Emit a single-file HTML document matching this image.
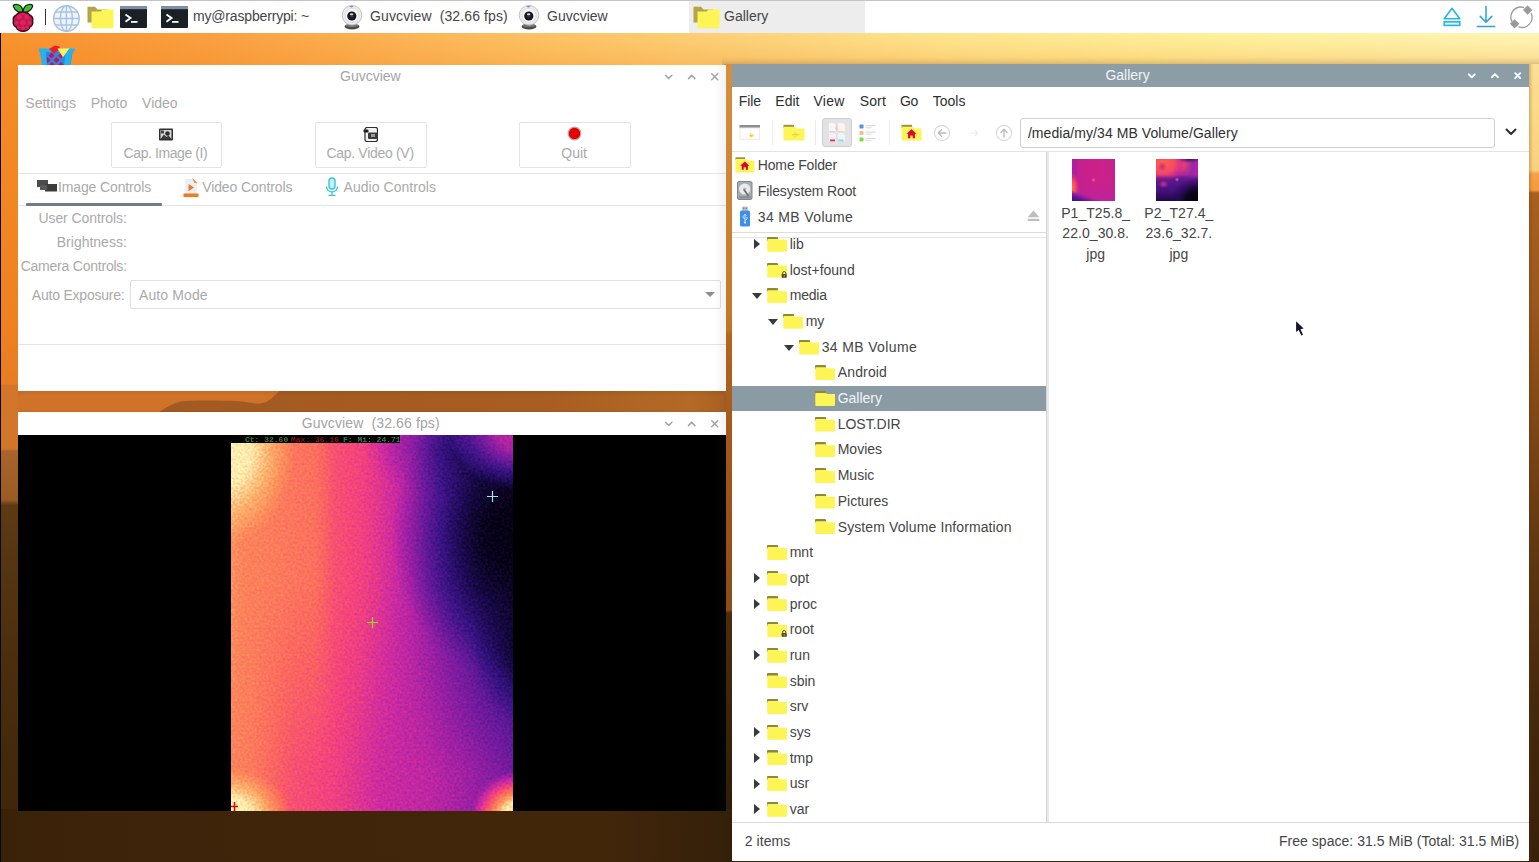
<!DOCTYPE html>
<html>
<head>
<meta charset="utf-8">
<title>Desktop</title>
<style>
*{box-sizing:border-box;margin:0;padding:0}
html,body{width:1539px;height:862px;overflow:hidden;background:#3e2309}
body{font-family:"Liberation Sans",sans-serif;font-size:14px;color:#3a3a3a;position:relative}
.abs{position:absolute}
.t{position:absolute;white-space:pre;line-height:16px;height:16px}
/* ---------- wallpaper ---------- */
#wp{position:absolute;left:0;top:0;width:1539px;height:862px;overflow:hidden}
/* ---------- taskbar ---------- */
#bar{position:absolute;left:0;top:0;width:1539px;height:33px;background:#fff;border-top:1px solid #c4c4c4}
#bar .t{top:7.2px;color:#454545}
/* ---------- windows ---------- */
.win{position:absolute;background:#fff;overflow:hidden}
.gray{color:#aaaaaa}
/* file manager */
#fm .t{color:#454545}
.fold{position:absolute;width:20px;height:15px}
.fold:before{content:"";position:absolute;left:0;top:0;width:11px;height:4px;background:#8f8638;border-radius:1px 1px 0 0}
.fold:after{content:"";position:absolute;left:0;top:2px;width:20px;height:13px;background:#fdf455;border-radius:1px;
  clip-path:polygon(0 0,0 100%,100% 100%,100% 8%,60% 8%,52% 0)}
.arr-r{position:absolute;width:0;height:0;border-left:6px solid #3a3a3a;border-top:5px solid transparent;border-bottom:5px solid transparent}
.arr-d{position:absolute;width:0;height:0;border-top:6px solid #3a3a3a;border-left:5px solid transparent;border-right:5px solid transparent}
</style>
</head>
<body>
<!-- ================= WALLPAPER ================= -->
<div id="wp">
  <!-- top sky strip -->
  <div class="abs" style="left:0;top:33px;width:1539px;height:36px;background:linear-gradient(180deg,rgba(236,120,10,0) 0,rgba(236,120,10,.05) 30%,rgba(236,120,10,.24) 100%),linear-gradient(90deg,#f7922f 0,#fa9f40 200px,#fcb254 380px,#fdc466 560px,#fdd27a 740px,#fee58e 950px,#fef09a 1200px,#fef5b4 1539px)"></div>
  <div class="abs" style="left:722px;top:57px;width:817px;height:8px;background:linear-gradient(180deg,rgba(130,100,70,0) 0,rgba(130,100,70,.10) 50%,rgba(130,100,70,.30) 100%)"></div>
  <!-- left strip -->
  <div class="abs" style="left:0;top:69px;width:20px;height:793px;background:linear-gradient(180deg,#f48c26 0,#ee8022 261px,#e87c22 315px,#d3752a 316px,#d0762a 380px,#a8642a 382px,#9a5c26 431px,#5c3a14 436px,#4a2e0e 591px,#3c2409 793px)"></div>
  <!-- band between the two guvcview windows -->
  <svg class="abs" style="left:18px;top:389px" width="714" height="25" viewBox="0 0 714 25"><defs><linearGradient id="bnd" x1="0" x2="1" y1="0" y2="0"><stop offset="0" stop-color="#a25a22"/><stop offset="0.3" stop-color="#a55b20"/><stop offset="0.68" stop-color="#a85e20"/><stop offset="0.93" stop-color="#b46a26"/><stop offset="1" stop-color="#a85e20"/></linearGradient><linearGradient id="bnv" x1="0" x2="0" y1="0" y2="1"><stop offset="0" stop-color="#000" stop-opacity="0.10"/><stop offset="0.3" stop-color="#000" stop-opacity="0"/><stop offset="0.8" stop-color="#000" stop-opacity="0"/><stop offset="1" stop-color="#000" stop-opacity="0.08"/></linearGradient></defs><rect width="714" height="25" fill="#d07328"/><path d="M138 25C150 17 158 12.500 168 12C185 11.300 205 11.500 220 12.200C232 13 236 15 242 14.500C252 13.500 256 6 264 0L714 0L714 25Z" fill="url(#bnd)"/><rect width="714" height="25" fill="url(#bnv)"/></svg>
  <!-- gap between left windows and file manager -->
  <div class="abs" style="left:724px;top:64px;width:10px;height:798px;background:linear-gradient(180deg,#d49040 0,#c47a2c 236px,#c07428 266px,#b4661f 270px,#a85c1e 336px,#96501a 476px,#8a4c18 546px,#4c2c0c 549px,#34200a 700px,#2a1805 798px)"></div>
  <!-- bottom band -->
  <div class="abs" style="left:0;top:809px;width:734px;height:53px;background:linear-gradient(90deg,#3a2209 0,#40250a 300px,#42260a 600px,#34200a 734px)"></div>
  <!-- right strip -->
  <div class="abs" style="left:1529px;top:64px;width:10px;height:798px;background:linear-gradient(90deg,rgba(90,50,10,.25) 0,rgba(90,50,10,0) 4px),linear-gradient(180deg,#fbdf96 0,#fbd884 56px,#fad07e 106px,#f6a046 110px,#f59a40 126px,#a8601f 129px,#9a581c 236px,#7a4414 376px,#5a3410 516px,#46280c 636px,#382008 798px)"></div>
  <!-- black left column -->
  <div class="abs" style="left:0;top:1px;width:1px;height:861px;background:#0a0603"></div>
</div>

<!-- ================= TASKBAR ================= -->
<div id="bar">
  <div class="abs" style="left:689px;top:0;width:176px;height:32px;background:#ededed"></div>
  <div class="abs" style="left:45px;top:8px;width:1px;height:16px;background:#333"></div>
  <span class="t" style="left:193px;letter-spacing:-0.17px">my@raspberrypi: ~</span>
  <span class="t" style="left:370px;letter-spacing:0.12px">Guvcview  (32.66 fps)</span>
  <span class="t" style="left:547px">Guvcview</span>
  <span class="t" style="left:724px">Gallery</span>
  
  <!-- raspberry -->
  <svg class="abs" style="left:11px;top:2px" width="24" height="29" viewBox="0 0 24 29">
    <path d="M11.6 9.6C9.5 9.8 4.2 8.6 2.4 3.6C2.2 2.2 3 1.4 4.4 1.4C7.6 1.3 10.8 3.4 11.8 7.2z" fill="#3fbf36" stroke="#0e2a0c" stroke-width="1.3"/>
    <path d="M12.4 9.6C14.5 9.8 19.8 8.6 21.6 3.6C21.8 2.2 21 1.4 19.6 1.4C16.4 1.3 13.2 3.4 12.2 7.2z" fill="#3fbf36" stroke="#0e2a0c" stroke-width="1.3"/>
    <path d="M12 9c3.2 0 5.6 1.2 6.6 3c2.6 1.2 3.6 3.6 3 6c0.6 2.6-0.6 5-2.8 6.2c-1 2.4-3.6 4-6.8 4s-5.8-1.6-6.8-4c-2.2-1.2-3.4-3.6-2.8-6.2c-0.600-2.400 0.400-4.800 3-6c1-1.800 3.400-3 6.600-3z" fill="#b81c50" stroke="#3a0a18" stroke-width="1.4"/>
    <g fill="#e6205e"><circle cx="8.2" cy="14" r="2.5"/><circle cx="15.8" cy="14" r="2.5"/><circle cx="12" cy="19.6" r="2.7"/><circle cx="5.6" cy="20" r="1.9"/><circle cx="18.4" cy="20" r="1.9"/><circle cx="12" cy="25.2" r="2"/><circle cx="7.600" cy="24.400" r="1.500"/><circle cx="16.400" cy="24.400" r="1.500"/><ellipse cx="12" cy="11" rx="2" ry="1.2"/></g>
  </svg>
  <!-- globe -->
  <svg class="abs" style="left:52px;top:2.5px" width="29" height="29" viewBox="0 0 29 29"><circle cx="14.400" cy="14.500" r="12.800" fill="#eef4fb" stroke="#a9c2e6" stroke-width="1.500"/><g fill="none" stroke="#a9c2e6" stroke-width="1.400"><ellipse cx="14.400" cy="14.500" rx="6" ry="12.800"/><path d="M14.400 1.700v25.600M1.600 14.500h25.600M3.600 8h21.600M3.600 21h21.600"/></g></svg>
  <svg class="abs" style="left:87px;top:4.7px" width="27" height="23" viewBox="0 0 27 23"><path d="M0.5 0.8h7.5l2.5 2.6h9.5v13h-19.5z" fill="#b3a44c"/><path d="M4.5 5.6h9l2.2-2h10.8v18.6h-22z" fill="#fdf455"/></svg>
  <svg class="abs" style="left:120.3px;top:4.5px" width="27" height="22" viewBox="0 0 27 22"><rect x="0" y="0" width="27" height="22" rx="1" fill="#1a2026"/><rect x="0" y="0" width="27" height="3.2" fill="#7f8fa6"/><path d="M5.5 8.5l5 3.6l-5 3.6" fill="none" stroke="#fff" stroke-width="1.9" stroke-linejoin="miter"/><rect x="11" y="15" width="6.5" height="1.8" fill="#fff"/></svg>
  <svg class="abs" style="left:161px;top:4.5px" width="27" height="22" viewBox="0 0 27 22"><rect x="0" y="0" width="27" height="22" rx="1" fill="#1a2026"/><rect x="0" y="0" width="27" height="3.2" fill="#7f8fa6"/><path d="M5.5 8.5l5 3.6l-5 3.6" fill="none" stroke="#fff" stroke-width="1.9" stroke-linejoin="miter"/><rect x="11" y="15" width="6.5" height="1.8" fill="#fff"/></svg>
  <svg class="abs" style="left:340.5px;top:3px" width="22" height="26" viewBox="0 0 22 26"><ellipse cx="11" cy="22.5" rx="7.5" ry="2.9" fill="#4a4a4a"/><ellipse cx="11" cy="21.6" rx="6.5" ry="1.6" fill="#777"/><circle cx="11" cy="11.2" r="9.8" fill="#ececec" stroke="#c4c4c4" stroke-width="1"/><circle cx="11" cy="11.5" r="7" fill="#f6f6f6" stroke="#dadada" stroke-width="0.8"/><circle cx="10.8" cy="12" r="4.6" fill="#15151c"/><circle cx="10.8" cy="12" r="2.2" fill="#2a2a4a"/><ellipse cx="10.6" cy="10.3" rx="1.8" ry="1" fill="#e8e8f0" opacity="0.9"/><ellipse cx="10.5" cy="2.6" rx="2" ry="0.8" fill="#8a8ad0"/></svg>
  <svg class="abs" style="left:518px;top:3px" width="22" height="26" viewBox="0 0 22 26"><ellipse cx="11" cy="22.5" rx="7.5" ry="2.9" fill="#4a4a4a"/><ellipse cx="11" cy="21.6" rx="6.5" ry="1.6" fill="#777"/><circle cx="11" cy="11.2" r="9.8" fill="#ececec" stroke="#c4c4c4" stroke-width="1"/><circle cx="11" cy="11.5" r="7" fill="#f6f6f6" stroke="#dadada" stroke-width="0.8"/><circle cx="10.8" cy="12" r="4.6" fill="#15151c"/><circle cx="10.8" cy="12" r="2.2" fill="#2a2a4a"/><ellipse cx="10.6" cy="10.3" rx="1.8" ry="1" fill="#e8e8f0" opacity="0.9"/><ellipse cx="10.5" cy="2.6" rx="2" ry="0.8" fill="#8a8ad0"/></svg>
  <svg class="abs" style="left:692.7px;top:4.7px" width="27" height="23" viewBox="0 0 27 23"><path d="M0.5 0.8h7.5l2.5 2.6h9.5v13h-19.5z" fill="#b3a44c"/><path d="M4.5 5.6h9l2.2-2h10.8v18.6h-22z" fill="#fdf455"/></svg>
  <!-- tray -->
  <svg class="abs" style="left:1441px;top:5px" width="22" height="22" viewBox="0 0 22 22"><path d="M11 2.300l7.800 10.400h-15.600z" fill="#f4fbfe" stroke="#26b6e0" stroke-width="1.600" stroke-linejoin="round"/><rect x="3.200" y="15.800" width="15.600" height="3.600" fill="#dff5fb" stroke="#26b6e0" stroke-width="1.600"/></svg>
  <svg class="abs" style="left:1475px;top:4px" width="22" height="24" viewBox="0 0 22 24"><path d="M11 1.500v15.500M5.200 11.400l5.800 5.800l5.800-5.800M2.400 21.600h17.200" fill="none" stroke="#2aa2d2" stroke-width="1.500" stroke-linecap="round" stroke-linejoin="round"/></svg>
  <svg class="abs" style="left:1508px;top:3px" width="27" height="27" viewBox="0 0 27 27"><path d="M16 3.600a10 10 0 0 0-11.800 14.400M10.600 22.800a10 10 0 0 0 12.400-13.800" fill="none" stroke="#9c9c9c" stroke-width="1.300"/><rect x="-3.300" y="-3.300" width="6.600" height="6.600" transform="translate(19.600 6) rotate(45)" fill="#9a9a9a"/><rect x="-3.300" y="-3.300" width="6.600" height="6.600" transform="translate(6.600 19.800) rotate(45)" fill="#9a9a9a"/></svg>

</div>

<svg class="abs" style="left:37px;top:44px" width="40" height="24" viewBox="0 0 40 24">
  <path d="M1.500 4.600h36.500l-1 3.600h-34.500z" fill="#22b4f0"/>
  <path d="M4.500 8h31l-2.500 16h-26z" fill="#2a86e0"/>
  <g fill="#c8105a"><path d="M14.500 8.500l3 3l-3 3l-3-3z"/><path d="M10.500 13l3 3l-3 3l-3-3z"/><path d="M19.500 13l3 3l-3 3l-3-3z"/><path d="M24 9l2.800 2.800l-2.800 2.800l-2.800-2.800z"/><path d="M15 18l3 3l-3 3l-3-3z"/><path d="M24 18l3 3l-3 3l-3-3z"/></g>
  <path d="M12 5l6-3.500l5 1.200l-1.500 3.800l-4.500 3z" fill="#ee1c24"/>
  <path d="M28.500 7l7-2l-2.500 19h-6z" fill="#22b4f0"/>
  <path d="M20.500 4.400l12-0.200l-6.500 9z" fill="#fff05a"/>
  <path d="M2.500 5.500l6-0.500l2 19h-5z" fill="#22b4f0"/>
</svg>

<!-- ================= WINDOW 1 : Guvcview controls ================= -->
<div class="win" id="w1" style="left:18px;top:65px;width:708px;height:326px">
  
  <span class="t gray" style="left:322px;top:3px;color:#a4a4a4">Guvcview</span>
  <svg class="abs" style="left:645px;top:6px" width="60" height="12" viewBox="0 0 60 12"><g fill="none" stroke="#a4a4a4" stroke-width="1.5" stroke-linecap="round" stroke-linejoin="round"><path d="M2.5 4.2l3.2 3.2l3.2-3.2"/><path d="M25.5 7.6l3.2-3.2l3.2 3.2"/><path d="M48.7 2.8l6 6M54.7 2.8l-6 6"/></g></svg>
  <span class="t gray" style="left:7.3px;top:30px">Settings</span>
  <span class="t gray" style="left:72.7px;top:30px">Photo</span>
  <span class="t gray" style="left:124.1px;top:30px">Video</span>
  <!-- buttons -->
  <div class="abs" style="left:93px;top:57px;width:111px;height:46px;border:1px solid #e3e3e3;border-radius:2px"></div>
  <div class="abs" style="left:297px;top:57px;width:112px;height:46px;border:1px solid #e3e3e3;border-radius:2px"></div>
  <div class="abs" style="left:501px;top:57px;width:112px;height:46px;border:1px solid #e3e3e3;border-radius:2px"></div>
  <span class="t gray" style="left:105.6px;top:80.4px;letter-spacing:-0.41px">Cap. Image (I)</span>
  <span class="t gray" style="left:308.4px;top:80.4px;letter-spacing:-0.3px">Cap. Video (V)</span>
  <span class="t gray" style="left:543.3px;top:80px">Quit</span>
  <!-- cap image icon -->
  <svg class="abs" style="left:141px;top:63px" width="14" height="13" viewBox="0 0 14 13"><rect x="0" y="0.5" width="14" height="12" rx="1" fill="#2e2e2e"/><rect x="1.5" y="2" width="11" height="9" fill="#d8d8d8"/><path d="M1.5 11l3.5-4.5l2.5 2.5l2-1.5l3 3.5z" fill="#3a3a3a"/><circle cx="8.5" cy="5.5" r="2.3" fill="#2e2e2e"/><rect x="2" y="2.5" width="3" height="3" fill="#444"/></svg>
  <!-- cap video icon -->
  <svg class="abs" style="left:345px;top:62px" width="15" height="15" viewBox="0 0 15 15"><rect x="2" y="0.5" width="12.5" height="14" rx="2" fill="#f2f2f2" stroke="#2e2e2e" stroke-width="1.2"/><rect x="0.5" y="2.5" width="5" height="3" rx="1" fill="#222"/><rect x="5" y="5.5" width="9.5" height="6.5" rx="1" fill="#3a3a3a"/><rect x="8" y="7" width="4" height="3" fill="#9a9a9a"/></svg>
  <!-- quit icon -->
  <svg class="abs" style="left:549px;top:61px" width="15" height="15" viewBox="0 0 15 15"><circle cx="7.5" cy="7.5" r="6.3" fill="#e60000" stroke="#c9a0a0" stroke-width="1.2"/></svg>
  <!-- tab bar -->
  <div class="abs" style="left:0;top:108px;width:708px;height:1px;background:#e6e6e6"></div>
  <div class="abs" style="left:0;top:140px;width:708px;height:1px;background:#e2e4e6"></div>
  <div class="abs" style="left:8px;top:138px;width:136px;height:3px;background:#717d84;border-radius:1px"></div>
  <svg class="abs" style="left:19px;top:115px" width="20" height="12" viewBox="0 0 20 12"><rect x="0" y="0" width="11" height="7" fill="#4c4c4c"/><rect x="8" y="4" width="12" height="7.5" fill="#3c3c3c"/><rect x="3" y="5" width="7" height="5" fill="#5a5a5a"/></svg>
  <span class="t gray" style="left:40px;top:114.4px;letter-spacing:-0.13px">Image Controls</span>
  <svg class="abs" style="left:165px;top:112px" width="16" height="21" viewBox="0 0 16 21"><path d="M2 2h8l4 4v11h-12z" fill="#eceff1"/><path d="M9 0.5l5.5 5.5h-3z" fill="#f08a3c"/><path d="M5.5 7l5.5 3.6l-5.5 3.6z" fill="#e87a2c"/><rect x="0.5" y="16.5" width="15" height="3.6" fill="#ee7a22"/></svg>
  <span class="t gray" style="left:184.2px;top:114.4px;letter-spacing:-0.1px">Video Controls</span>
  <svg class="abs" style="left:307px;top:112px" width="14" height="20" viewBox="0 0 14 20"><rect x="4" y="1" width="6" height="11" rx="3" fill="#c9f0f6" stroke="#36c4dc" stroke-width="1.4"/><path d="M1.5 9.5a5.5 5.5 0 0 0 11 0M7 15v3M3.5 18.3h7" fill="none" stroke="#36c4dc" stroke-width="1.3"/></svg>
  <span class="t gray" style="left:325.5px;top:114.4px;letter-spacing:0.05px">Audio Controls</span>
  <!-- form -->
  <span class="t gray" style="right:599.2px;top:145px;letter-spacing:-0.08px">User Controls:</span>
  <span class="t gray" style="right:599.2px;top:169.4px">Brightness:</span>
  <span class="t gray" style="right:599.2px;top:193.4px;letter-spacing:-0.22px">Camera Controls:</span>
  <span class="t gray" style="right:601.5px;top:221.6px;letter-spacing:-0.22px">Auto Exposure:</span>
  <div class="abs" style="left:112px;top:215px;width:591px;height:29px;border:1px solid #dedede;border-radius:2px"></div>
  <span class="t gray" style="left:121px;top:221.6px;letter-spacing:0.11px">Auto Mode</span>
  <div class="abs" style="left:687px;top:226.5px;width:0;height:0;border-top:5px solid #8e8e8e;border-left:5px solid transparent;border-right:5px solid transparent"></div>
  <div class="abs" style="left:0;top:279px;width:708px;height:1px;background:#e4e4e4"></div>

</div>

<!-- ================= WINDOW 2 : Guvcview video ================= -->
<div class="win" id="w2" style="left:18px;top:412px;width:708px;height:399px">
  <div class="abs" style="left:0;top:23px;width:708px;height:376px;background:#000"></div>
  <!--THERMAL-START--><svg class="abs" style="left:213px;top:23px" width="282" height="376" viewBox="0 0 282 376">
<defs>
<filter id="cmap" x="0" y="0" width="100%" height="100%" color-interpolation-filters="sRGB">
<feTurbulence type="fractalNoise" baseFrequency="0.42" numOctaves="1" seed="7" result="n"/>
<feColorMatrix in="n" type="matrix" values="1 0 0 0 0  1 0 0 0 0  1 0 0 0 0  0 0 0 0 1" result="ng"/>
<feComposite in="SourceGraphic" in2="ng" operator="arithmetic" k1="0" k2="1" k3="0.17" k4="-0.085" result="s"/>
<feComponentTransfer in="s">
<feFuncR type="table" tableValues="0.016 0.110 0.227 0.416 0.604 0.800 0.957 0.984 0.988 0.992 0.996"/>
<feFuncG type="table" tableValues="0.008 0.039 0.078 0.102 0.125 0.165 0.259 0.400 0.541 0.722 0.965"/>
<feFuncB type="table" tableValues="0.059 0.314 0.522 0.612 0.643 0.635 0.494 0.376 0.353 0.447 0.729"/>
</feComponentTransfer>
</filter>
<linearGradient id="tb" x1="0" x2="1" y1="0" y2="0"><stop offset="0" stop-color="#d1d1d1"/><stop offset="0.04" stop-color="#c7c7c7"/><stop offset="0.15" stop-color="#c2c2c2"/><stop offset="0.3" stop-color="#bababa"/><stop offset="0.335" stop-color="#afafaf"/><stop offset="0.37" stop-color="#a3a3a3"/><stop offset="0.46" stop-color="#999999"/><stop offset="0.52" stop-color="#8e8e8e"/><stop offset="0.58" stop-color="#808080"/><stop offset="0.642" stop-color="#737373"/><stop offset="0.7" stop-color="#616161"/><stop offset="0.759" stop-color="#4f4f4f"/><stop offset="0.83" stop-color="#3b3b3b"/><stop offset="0.89" stop-color="#292929"/><stop offset="1" stop-color="#1c1c1c"/></linearGradient>
<linearGradient id="tbot" x1="0" x2="1" y1="0" y2="0"><stop offset="0" stop-color="#c7c7c7"/><stop offset="0.08" stop-color="#bfbfbf"/><stop offset="0.16" stop-color="#b0b0b0"/><stop offset="0.22" stop-color="#a3a3a3"/><stop offset="0.36" stop-color="#989898"/><stop offset="0.45" stop-color="#8c8c8c"/><stop offset="0.53" stop-color="#808080"/><stop offset="0.7" stop-color="#787878"/><stop offset="0.82" stop-color="#6b6b6b"/><stop offset="1" stop-color="#525252"/></linearGradient>
<linearGradient id="tmv" x1="0" x2="0" y1="0" y2="1"><stop offset="0.40" stop-color="#fff" stop-opacity="0"/><stop offset="0.90" stop-color="#fff" stop-opacity="1"/></linearGradient>
<mask id="tm"><rect width="282" height="376" fill="url(#tmv)"/></mask>
<radialGradient id="tdk" cx="0.5" cy="0.5" r="0.5"><stop offset="0" stop-color="#000" stop-opacity="0.95"/><stop offset="0.2" stop-color="#000" stop-opacity="0.9"/><stop offset="0.58" stop-color="#000" stop-opacity="0.4"/><stop offset="1" stop-color="#000" stop-opacity="0"/></radialGradient>
<radialGradient id="thot" cx="0.5" cy="0.5" r="0.5"><stop offset="0" stop-color="#fff" stop-opacity="1"/><stop offset="0.35" stop-color="#fff" stop-opacity="0.95"/><stop offset="0.7" stop-color="#fff" stop-opacity="0.4"/><stop offset="1" stop-color="#fff" stop-opacity="0"/></radialGradient>
<linearGradient id="tle" x1="0" x2="1" y1="0" y2="0"><stop offset="0" stop-color="#fff" stop-opacity="0.8"/><stop offset="1" stop-color="#fff" stop-opacity="0"/></linearGradient>
<linearGradient id="tlev" x1="0" x2="0" y1="0" y2="1"><stop offset="0" stop-color="#fff"/><stop offset="0.15" stop-color="#fff"/><stop offset="0.45" stop-color="#000"/><stop offset="1" stop-color="#000"/></linearGradient>
<mask id="tlm"><rect width="282" height="376" fill="url(#tlev)"/></mask>
</defs>
<g filter="url(#cmap)">
<rect width="282" height="376" fill="url(#tb)"/>
<rect width="282" height="376" fill="url(#tbot)" mask="url(#tm)"/>
<ellipse cx="282" cy="100" rx="122" ry="142" fill="url(#tdk)"/>
<ellipse cx="228" cy="10" rx="95" ry="55" fill="url(#tdk)" opacity="0.35"/>
<ellipse cx="292" cy="215" rx="50" ry="75" fill="url(#tdk)" opacity="0.7"/>
<ellipse cx="292" cy="-6" rx="76" ry="62" fill="url(#thot)" opacity="0.42"/>
<ellipse cx="-2" cy="381" rx="62" ry="48" fill="url(#thot)"/>
<ellipse cx="288" cy="382" rx="48" ry="46" fill="url(#thot)"/>
<ellipse cx="-4" cy="15" rx="68" ry="95" fill="url(#thot)" opacity="0.97"/>
</g>
<rect x="0" y="0" width="169" height="8" fill="#020402"/>
<g font-family="Liberation Mono" font-size="8" font-weight="bold">
<text x="14" y="7" fill="#6fbf6a" opacity="0.6">Ct: 32.60</text>
<text x="60" y="7" fill="#c02020" opacity="0.65">Max: 36.10</text>
<text x="112" y="7" fill="#5fbf9a" opacity="0.6">F: Mi: 24.71</text>
</g>
<path d="M256 61.5h11M261.5 56v11" stroke="#a6e6ea" stroke-width="1.2" fill="none"/>
<path d="M136 187.5h11M141.5 182v11" stroke="#8fe02a" stroke-width="1.2" fill="none"/>
<path d="M0 371.5h7M3.5 367v9" stroke="#d01010" stroke-width="1.6" fill="none"/>
</svg><!--THERMAL-END-->
  
  <span class="t" style="left:283.8px;top:3px;color:#a4a4a4;letter-spacing:0.12px">Guvcview  (32.66 fps)</span>
  <svg class="abs" style="left:645px;top:6px" width="60" height="12" viewBox="0 0 60 12"><g fill="none" stroke="#a4a4a4" stroke-width="1.5" stroke-linecap="round" stroke-linejoin="round"><path d="M2.5 4.2l3.2 3.2l3.2-3.2"/><path d="M25.5 7.6l3.2-3.2l3.2 3.2"/><path d="M48.7 2.8l6 6M54.7 2.8l-6 6"/></g></svg>

</div>

<div id="fmshade" class="abs" style="left:714px;top:65px;width:12px;height:746px;background:linear-gradient(90deg,rgba(70,80,90,0) 0,rgba(70,80,90,.07) 100%)"></div>
<!-- ================= WINDOW 3 : file manager ================= -->
<div class="win" id="fm" style="left:732px;top:64px;width:797px;height:797px">
  <div class="abs" style="left:0;top:0;width:797px;height:23px;background:#8d9da5"></div>
  <!--FM-START-->
  <span class="t" style="left:373.4px;top:3px;color:#f1f4f6">Gallery</span>
  <svg class="abs" style="left:732px;top:4px" width="64" height="16" viewBox="0 0 64 16"><g fill="none" stroke="#fafcfd" stroke-width="1.9" stroke-linecap="round" stroke-linejoin="round"><path d="M4.800 6.300l3 3l3-3"/><path d="M27.900 9.200l3-3l3 3"/><path d="M51.200 5.200l5 5M56.200 5.200l-5 5"/></g></svg>
  <span class="t" style="left:6.8px;top:28.9px;letter-spacing:-0.14px;color:#303030">File</span>
  <span class="t" style="left:43.3px;top:28.9px;letter-spacing:0px;color:#303030">Edit</span>
  <span class="t" style="left:81.5px;top:28.9px;letter-spacing:0.28px;color:#303030">View</span>
  <span class="t" style="left:127.7px;top:28.9px;letter-spacing:0.15px;color:#303030">Sort</span>
  <span class="t" style="left:168px;top:28.9px;letter-spacing:-0.44px;color:#303030">Go</span>
  <span class="t" style="left:200.8px;top:28.9px;letter-spacing:0px;color:#303030">Tools</span>
  <div class="abs" style="left:0;top:87px;width:797px;height:1px;background:#e2e2e2"></div>
  <svg class="abs" style="left:7px;top:60px" width="22" height="17" viewBox="0 0 22 17"><rect x="0.5" y="1" width="20.5" height="3" fill="#8e8e8e"/><rect x="1" y="4" width="19.5" height="11.5" fill="#fdfdfd" stroke="#ececec" stroke-width="1"/><path d="M11 8.5l5 2.8l-5 2.8z" fill="#f5ee6a"/><rect x="10.5" y="11" width="3" height="1.4" fill="#d8cf5a"/></svg>
  <div class="abs" style="left:40px;top:56px;width:1px;height:25px;background:#ececec"></div>
  <svg class="abs" style="left:51px;top:60px" width="22" height="17" viewBox="0 0 22 17"><rect x="0.5" y="0.8" width="10.5" height="3.2" fill="#9a9040"/><path d="M0.5 2.8h11l2 1.8h8v12h-21z" fill="#fdf455"/><path d="M11 7.5l6 3l-6 3z" fill="#f2e64e"/><rect x="9" y="10" width="6" height="1.2" fill="#e2d648"/></svg>
  <div class="abs" style="left:83px;top:56px;width:1px;height:25px;background:#ececec"></div>
  <div class="abs" style="left:90px;top:54px;width:30px;height:29px;background:#e3e3e3;border:1px solid #cfcfcf;border-radius:3px"></div>
  <svg class="abs" style="left:95px;top:58px" width="20" height="21" viewBox="0 0 20 21"><path d="M2 1h5l2 2v6h-7z" fill="#f6f6fb"/><path d="M11 1h5l2 2v6h-7z" fill="#fbf3ec"/><path d="M2 11h5l2 2v6h-7z" fill="#fbeef4"/><path d="M11 11h5l2 2v6h-7z" fill="#eef6fb"/><path d="M9.5 2l1.5 4l-1.5 4l-1.5-4z" fill="#f4c6d4"/><rect x="3" y="17.5" width="5" height="1.8" fill="#e0306a"/><rect x="11.5" y="17.5" width="5" height="1.8" fill="#8ad6e6"/><rect x="3" y="9" width="4.5" height="1.2" fill="#c9d6f0"/><rect x="11.5" y="9" width="4.5" height="1.2" fill="#f2d2b8"/></svg>
  <svg class="abs" style="left:127px;top:60px" width="18" height="18" viewBox="0 0 18 18"><rect x="0.5" y="0.5" width="4" height="4" rx="0.8" fill="#5b8fe2"/><rect x="0.5" y="7" width="4" height="4" rx="0.8" fill="#f4b99c"/><rect x="0.5" y="13.5" width="4" height="4" rx="0.8" fill="#7fdc3e"/><g fill="#dcdcdc"><rect x="6.5" y="1" width="10" height="1.2"/><rect x="6.5" y="3.2" width="6" height="1"/><rect x="6.5" y="7.5" width="10" height="1.2"/><rect x="6.5" y="9.7" width="6" height="1"/><rect x="6.5" y="14" width="10" height="1.2"/><rect x="6.5" y="16.2" width="6" height="1"/></g></svg>
  <div class="abs" style="left:157px;top:56px;width:1px;height:25px;background:#ececec"></div>
  <svg class="abs" style="left:169px;top:60px" width="21" height="17" viewBox="0 0 21 17"><rect x="0.5" y="0.8" width="10.5" height="3.2" fill="#9a9040"/><path d="M0.5 2.8h11l2 1.8h7v12h-20z" fill="#fdf455"/><path d="M10.5 5.2l5 4.6h-1.6v4.4h-2.2v-2.8h-2.4v2.8h-2.2v-4.4h-1.6z" fill="#e0003c"/></svg>
  <svg class="abs" style="left:201px;top:60px" width="18" height="18" viewBox="0 0 18 18"><circle cx="9" cy="9" r="7.6" fill="none" stroke="#d9d9d9" stroke-width="1.2"/><path d="M13 9h-7.5M8.5 5.8l-3.2 3.2l3.2 3.2" fill="none" stroke="#b9b9b9" stroke-width="1.3" stroke-linecap="round" stroke-linejoin="round"/></svg>
  <svg class="abs" style="left:233px;top:60px" width="18" height="18" viewBox="0 0 18 18"><path d="M5.5 9h7M10 6.2l2.8 2.8l-2.8 2.8" fill="none" stroke="#ededed" stroke-width="1.2" stroke-linecap="round" stroke-linejoin="round"/></svg>
  <svg class="abs" style="left:263px;top:60px" width="18" height="18" viewBox="0 0 18 18"><circle cx="9" cy="9" r="7.6" fill="none" stroke="#d9d9d9" stroke-width="1.2"/><path d="M9 13v-7.5M5.8 8.5l3.2-3.2l3.2 3.2" fill="none" stroke="#b9b9b9" stroke-width="1.3" stroke-linecap="round" stroke-linejoin="round"/></svg>
  <div class="abs" style="left:288px;top:54px;width:475px;height:30px;border:1px solid #cfcfcf;border-radius:3px;background:#fff"></div>
  <span class="t" style="left:295.9px;top:60.6px;letter-spacing:0.07px;color:#303030">/media/my/34 MB Volume/Gallery</span>
  <svg class="abs" style="left:772px;top:62px" width="14" height="12" viewBox="0 0 14 12"><path d="M2.5 3.5l4.5 4.5l4.5-4.5" fill="none" stroke="#2e2e2e" stroke-width="2" stroke-linecap="round" stroke-linejoin="round"/></svg>
  <div class="abs" style="left:314px;top:88px;width:3px;height:670px;background:#e9e9e9;border-left:1px solid #d4d4d4"></div>
  <svg class="abs" style="left:3px;top:93px" width="20" height="16" viewBox="0 0 20 16"><rect x="0.5" y="0.3" width="9.5" height="3" fill="#9a9040"/><path d="M0.5 2h10l1.8 1.6h7.2v11.8h-19z" fill="#fdf455"/><path d="M9.8 4.6l4.6 4.2h-1.5v4h-2v-2.6h-2.2v2.6h-2v-4h-1.5z" fill="#e0003c"/></svg>
  <span class="t" style="left:25.8px;top:93.4px;letter-spacing:-0.16px">Home Folder</span>
  <svg class="abs" style="left:5px;top:117px" width="16" height="19" viewBox="0 0 16 19"><rect x="0.5" y="0.5" width="14.5" height="18" rx="1.5" fill="#a9adb2" stroke="#80858b" stroke-width="1"/><circle cx="7.7" cy="8" r="5.6" fill="#e8eaec"/><circle cx="7.7" cy="8" r="1.6" fill="#b4b8bc"/><path d="M7.2 9l4 5.5" stroke="#6e7378" stroke-width="1.8" stroke-linecap="round"/><rect x="1.5" y="15.2" width="12.5" height="2.3" fill="#8c9096"/></svg>
  <span class="t" style="left:25.8px;top:119.4px;letter-spacing:-0.14px">Filesystem Root</span>
  <svg class="abs" style="left:7px;top:142px" width="12" height="21" viewBox="0 0 12 21"><rect x="3" y="0.5" width="6" height="4.5" fill="#c6cbd0"/><rect x="4.2" y="1.6" width="1.2" height="1.6" fill="#6a7076"/><rect x="6.6" y="1.6" width="1.2" height="1.6" fill="#6a7076"/><rect x="1" y="4.5" width="10" height="16" rx="1.5" fill="#3f8fea"/><path d="M6 8v8M6 8l-1.4 1.8M6 8l1.4 1.8M6 13l-2-1.5v-1.5M6 14.5l2-1.5v-2" stroke="#cfe4fb" stroke-width="0.9" fill="none"/><circle cx="6" cy="16.6" r="1.1" fill="#cfe4fb"/></svg>
  <span class="t" style="left:25.8px;top:145px;letter-spacing:0.36px">34 MB Volume</span>
  <svg class="abs" style="left:295px;top:146px" width="13" height="12" viewBox="0 0 13 12"><path d="M6.5 0.5l5.8 6.8h-11.6z" fill="#bdbdbd"/><rect x="0.7" y="8.8" width="11.6" height="2.2" fill="#bdbdbd"/></svg>
  <div class="abs" style="left:0;top:167.5px;width:314px;height:1px;background:#dcdcdc"></div>
  <div class="abs" style="left:0;top:173px;width:314px;height:1px;background:#e6e6e6"></div>
  <div class="arr-r" style="left:22.0px;top:175.4px"></div>
  <div class="fold" style="left:35.3px;top:172.8px"></div>
  <span class="t" style="left:57.7px;top:172.0px">lib</span>
  <div class="fold" style="left:35.3px;top:198.5px"></div>
  <svg class="abs" style="left:48.5px;top:206.7px" width="6.4" height="7.2" viewBox="0 0 8 9"><path d="M2 4v-1.3a2 2 0 0 1 4 0v1.3" fill="none" stroke="#5a5210" stroke-width="1.2"/><rect x="0.8" y="3.8" width="6.4" height="4.6" rx="0.6" fill="#4a4a2a"/><rect x="3.4" y="5.2" width="1.2" height="1.8" fill="#d8d08a"/></svg>
  <span class="t" style="left:57.7px;top:197.7px">lost+found</span>
  <div class="arr-d" style="left:20.3px;top:229.2px"></div>
  <div class="fold" style="left:35.3px;top:224.2px"></div>
  <span class="t" style="left:57.7px;top:223.4px;letter-spacing:-0.21px">media</span>
  <div class="arr-d" style="left:36.3px;top:254.8px"></div>
  <div class="fold" style="left:51.3px;top:249.8px"></div>
  <span class="t" style="left:73.7px;top:249.0px">my</span>
  <div class="arr-d" style="left:52.3px;top:280.5px"></div>
  <div class="fold" style="left:67.3px;top:275.5px"></div>
  <span class="t" style="left:89.7px;top:274.7px;letter-spacing:0.36px">34 MB Volume</span>
  <div class="fold" style="left:83.3px;top:301.2px"></div>
  <span class="t" style="left:105.7px;top:300.4px;letter-spacing:0.16px">Android</span>
  <div class="abs" style="left:0;top:321.9px;width:314px;height:25.2px;background:#8b9ba3"></div>
  <div class="fold" style="left:83.3px;top:326.9px"></div>
  <span class="t" style="left:105.7px;top:326.1px;color:#f2f5f7">Gallery</span>
  <div class="fold" style="left:83.3px;top:352.6px"></div>
  <span class="t" style="left:105.7px;top:351.8px">LOST.DIR</span>
  <div class="fold" style="left:83.3px;top:378.2px"></div>
  <span class="t" style="left:105.7px;top:377.4px">Movies</span>
  <div class="fold" style="left:83.3px;top:403.9px"></div>
  <span class="t" style="left:105.7px;top:403.1px">Music</span>
  <div class="fold" style="left:83.3px;top:429.6px"></div>
  <span class="t" style="left:105.7px;top:428.8px">Pictures</span>
  <div class="fold" style="left:83.3px;top:455.3px"></div>
  <span class="t" style="left:105.7px;top:454.5px;letter-spacing:0.11px">System Volume Information</span>
  <div class="fold" style="left:35.3px;top:481.0px"></div>
  <span class="t" style="left:57.7px;top:480.2px">mnt</span>
  <div class="arr-r" style="left:22.0px;top:509.2px"></div>
  <div class="fold" style="left:35.3px;top:506.6px"></div>
  <span class="t" style="left:57.7px;top:505.8px">opt</span>
  <div class="arr-r" style="left:22.0px;top:534.9px"></div>
  <div class="fold" style="left:35.3px;top:532.3px"></div>
  <span class="t" style="left:57.7px;top:531.5px">proc</span>
  <div class="fold" style="left:35.3px;top:558.0px"></div>
  <svg class="abs" style="left:48.5px;top:566.2px" width="6.4" height="7.2" viewBox="0 0 8 9"><path d="M2 4v-1.3a2 2 0 0 1 4 0v1.3" fill="none" stroke="#5a5210" stroke-width="1.2"/><rect x="0.8" y="3.8" width="6.4" height="4.6" rx="0.6" fill="#4a4a2a"/><rect x="3.4" y="5.2" width="1.2" height="1.8" fill="#d8d08a"/></svg>
  <span class="t" style="left:57.7px;top:557.2px">root</span>
  <div class="arr-r" style="left:22.0px;top:586.3px"></div>
  <div class="fold" style="left:35.3px;top:583.7px"></div>
  <span class="t" style="left:57.7px;top:582.9px">run</span>
  <div class="fold" style="left:35.3px;top:609.4px"></div>
  <span class="t" style="left:57.7px;top:608.6px">sbin</span>
  <div class="fold" style="left:35.3px;top:635.0px"></div>
  <span class="t" style="left:57.7px;top:634.2px">srv</span>
  <div class="arr-r" style="left:22.0px;top:663.3px"></div>
  <div class="fold" style="left:35.3px;top:660.7px"></div>
  <span class="t" style="left:57.7px;top:659.9px">sys</span>
  <div class="arr-r" style="left:22.0px;top:689.0px"></div>
  <div class="fold" style="left:35.3px;top:686.4px"></div>
  <span class="t" style="left:57.7px;top:685.6px">tmp</span>
  <div class="arr-r" style="left:22.0px;top:714.7px"></div>
  <div class="fold" style="left:35.3px;top:712.1px"></div>
  <span class="t" style="left:57.7px;top:711.3px">usr</span>
  <div class="arr-r" style="left:22.0px;top:740.4px"></div>
  <div class="fold" style="left:35.3px;top:737.8px"></div>
  <span class="t" style="left:57.7px;top:737.0px">var</span>
  <div class="abs" style="left:0;top:757.5px;width:797px;height:1px;background:#dcdcdc"></div>
  <span class="t" style="left:12.7px;top:768.7px;letter-spacing:0.07px">2 items</span>
  <span class="t" style="right:9.7px;top:768.7px;letter-spacing:0.04px">Free space: 31.5 MiB (Total: 31.5 MiB)</span>
  <div class="abs" style="left:340.3px;top:94.7px;width:42.3px;height:42.2px;background:
radial-gradient(circle at 50% 50%,rgba(220,130,200,.75) 0,rgba(220,130,200,0) 2.2px),
linear-gradient(20deg,#3a1080 0,#5c1492 8%,#8a1ca0 13%,rgba(150,30,160,0) 19%),
radial-gradient(ellipse 7.5px 15px at 0 68%,#fd6e50 0,#f84c5e 45%,rgba(236,50,110,.6) 75%,rgba(220,40,130,0) 100%),
linear-gradient(180deg,rgba(180,40,175,0) 55%,rgba(176,38,172,.55) 100%),
linear-gradient(90deg,#ac1ea2 0,#b01e9e 9%,#c4208e 15%,#cc2088 55%,#c6228c 100%)"></div>
  <div class="abs" style="left:423.7px;top:94.7px;width:42.3px;height:42.2px;background:
radial-gradient(circle at 50% 49%,rgba(225,150,205,.75) 0,rgba(225,150,205,0) 2.2px),
radial-gradient(ellipse 5px 4px at 18% 60%,rgba(215,60,150,.85) 0,rgba(215,60,150,0) 100%),
radial-gradient(ellipse 4.5px 5px at 15% 18%,rgba(190,36,130,.85) 0,rgba(190,36,130,0) 100%),
radial-gradient(ellipse 27px 24px at 100% 100%,#05020c 0,#0a0418 42%,rgba(36,10,84,.7) 72%,rgba(60,16,120,0) 100%),
linear-gradient(180deg,rgba(0,0,0,0) 38%,rgba(60,16,130,.55) 47%,rgba(44,12,112,.8) 78%,rgba(20,6,60,.92) 100%),
radial-gradient(ellipse 13px 4px at 80% 0,rgba(40,10,90,.8) 0,rgba(40,10,90,0) 100%),
radial-gradient(ellipse 25px 20px at 16% 10%,#fc6250 0,#f64a64 48%,rgba(226,50,134,.65) 76%,rgba(160,30,160,0) 100%),
radial-gradient(ellipse 9px 13px at 66% 14%,rgba(244,76,104,.85) 0,rgba(200,40,150,0) 100%),
linear-gradient(90deg,#a020a0 0,#8e1ea0 60%,#a828aa 100%)"></div>
  <span class="t" style="left:303.7px;width:120px;text-align:center;top:141.4px;letter-spacing:0.06px">P1_T25.8_</span>
  <span class="t" style="left:303.7px;width:120px;text-align:center;top:161.4px;letter-spacing:0.06px">22.0_30.8.</span>
  <span class="t" style="left:303.7px;width:120px;text-align:center;top:181.8px;letter-spacing:0.06px">jpg</span>
  <span class="t" style="left:386.9px;width:120px;text-align:center;top:141.4px;letter-spacing:0.06px">P2_T27.4_</span>
  <span class="t" style="left:386.9px;width:120px;text-align:center;top:161.4px;letter-spacing:0.06px">23.6_32.7.</span>
  <span class="t" style="left:386.9px;width:120px;text-align:center;top:181.8px;letter-spacing:0.06px">jpg</span>
  <!--FM-END-->
</div>

<svg class="abs" style="left:1295px;top:320px" width="10" height="17" viewBox="0 0 10 17"><path d="M1.100 1.200L1.100 12L3.700 9.900L6.300 15.600L8 14.800L5.500 9.200L8.600 8.600Z" fill="#17122e"/></svg>
</body>
</html>
